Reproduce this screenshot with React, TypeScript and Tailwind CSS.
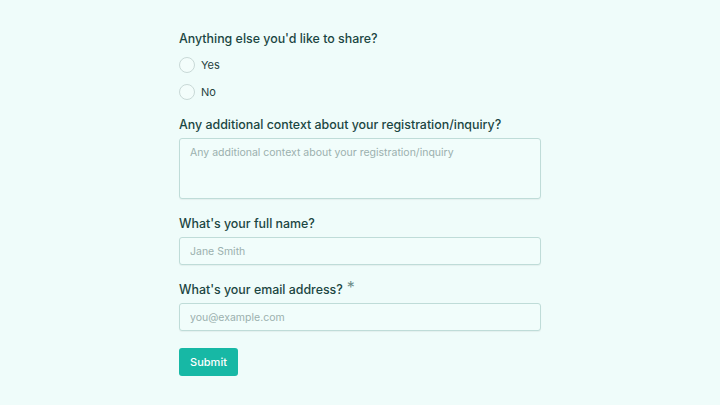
import React from "react";

export default function App() {
  const font = { fontFamily: "Inter, 'Noto Sans', sans-serif" };
  const label = "h-[20px] text-[12.4px] leading-[20px] font-medium text-[#1b4642]";
  const field =
    "mt-[3px] w-full rounded-[3px] border border-[#bfdcd8] bg-[#f1fdfb] px-[10px] text-[10.5px] text-[#1d4b47] shadow-[0_1px_1px_rgba(0,0,0,0.05)] outline-none placeholder:text-[#9bb0ae]";
  return (
    <div className="min-h-[405px] w-full bg-[#effcfa]" style={font}>
      <div className="mx-auto flex w-[362px] flex-col pt-[29px] pb-[29px]">
        <div className={label}>Anything else you'd like to share?</div>
        <div className="mt-[4px] flex flex-col gap-[3px]">
          {["Yes", "No"].map((o) => (
            <label key={o} className="flex h-[24px] items-center gap-[6px]">
              <span className="h-[16px] w-[16px] rounded-full border border-[#c9d9d7] bg-[#f3fdfb]" />
              <span className="text-[11px] text-[#27423f]">{o}</span>
            </label>
          ))}
        </div>
        <div className={"mt-[11px] " + label}>
          Any additional context about your registration/inquiry?
        </div>
        <textarea
          className={field + " h-[61px] resize-none py-[6px] leading-[16px]"}
          placeholder="Any additional context about your registration/inquiry"
        />
        <div className={"mt-[15px] " + label}>What's your full name?</div>
        <input className={field + " h-[28px]"} placeholder="Jane Smith" />
        <div className={"mt-[15px] flex " + label}>
          What's your email address?
          <span className="ml-[4px] -mt-[3px] text-[16px] font-normal text-[#6f8f8b]">*</span>
        </div>
        <input className={field + " h-[28px]"} placeholder="you@example.com" />
        <div className="mt-[17px]">
          <button className="h-[28px] w-[59px] rounded-[3px] bg-[#17b8a5] text-[11px] font-medium text-white">
            Submit
          </button>
        </div>
      </div>
    </div>
  );
}
